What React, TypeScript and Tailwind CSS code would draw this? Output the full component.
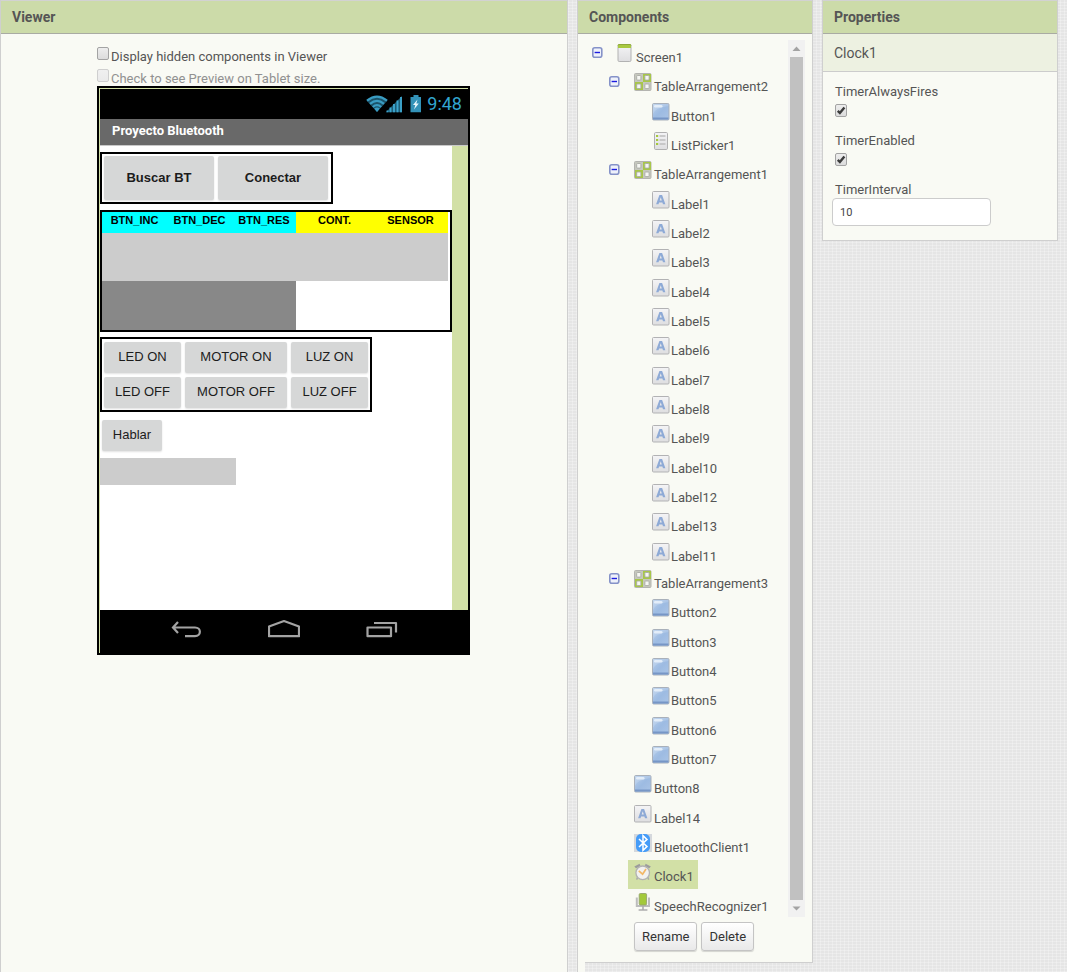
import React, { useState } from "react";

type Kind = "screen" | "table" | "button" | "list" | "label" | "bluetooth" | "clock" | "speech";
type Node = { name: string; kind: Kind; depth: 0 | 1 | 2; open?: boolean };

const label = (n: number): Node => ({ name: `Label${n}`, kind: "label", depth: 2 });
const button = (n: number): Node => ({ name: `Button${n}`, kind: "button", depth: 2 });

const upperNodes: Node[] = [
  { name: "Screen1", kind: "screen", depth: 0, open: true },
  { name: "TableArrangement2", kind: "table", depth: 1, open: true },
  button(1),
  { name: "ListPicker1", kind: "list", depth: 2 },
  { name: "TableArrangement1", kind: "table", depth: 1, open: true },
  ...[1, 2, 3, 4, 5, 6, 7, 8, 9, 10, 12, 13, 11].map(label),
];

const lowerNodes: Node[] = [
  { name: "TableArrangement3", kind: "table", depth: 1, open: true },
  ...[2, 3, 4, 5, 6, 7].map(button),
  { name: "Button8", kind: "button", depth: 1 },
  { name: "Label14", kind: "label", depth: 1 },
  { name: "BluetoothClient1", kind: "bluetooth", depth: 1 },
  { name: "Clock1", kind: "clock", depth: 1 },
  { name: "SpeechRecognizer1", kind: "speech", depth: 1 },
];

function Defs() {
  return (
    <svg width="0" height="0" className="absolute" aria-hidden="true">
      <defs>
        <linearGradient id="grey" x1="0" y1="0" x2="0" y2="1">
          <stop offset="0" stopColor="#f4f4f6" />
          <stop offset="1" stopColor="#dedee0" />
        </linearGradient>
        <linearGradient id="blue" x1="0" y1="0" x2="1" y2="1">
          <stop offset="0" stopColor="#b9d0ec" />
          <stop offset="0.5" stopColor="#9dbbe2" />
          <stop offset="1" stopColor="#aac4e6" />
        </linearGradient>
      </defs>
    </svg>
  );
}

function KindIcon({ kind }: { kind: Kind }) {
  return (
    <svg viewBox="0 0 18 18" className="mt-[3px] h-[18px] w-[18px] shrink-0" aria-hidden="true">
      {kind === "screen" && (
        <>
          <rect x="2" y="0.5" width="13" height="17" rx="1.2" fill="url(#grey)" stroke="#b2b2b2" />
          <path d="M2 1.5Q2 0.5 3 0.5H14Q15 0.5 15 1.5V4H2Z" fill="#a8c93f" />
          <path d="M2 1.5Q2 0.5 3 0.5H14Q15 0.5 15 1.5" fill="none" stroke="#8fa83a" />
        </>
      )}
      {kind === "table" && (
        <>
          <rect x="0.5" y="0.5" width="16.5" height="17" rx="1" fill="#c6c8bd" stroke="#b4b4b0" />
          <rect x="9" y="1" width="8" height="8" fill="#a8c748" />
          <rect x="1" y="9" width="8" height="8" fill="#a8c748" />
          <g fill="#f6f7f2" stroke="#a9aaa5" strokeWidth="0.9">
            <rect x="2.7" y="2.5" width="4.2" height="4.6" rx="0.8" />
            <rect x="10.9" y="2.5" width="4.2" height="4.6" rx="0.8" />
            <rect x="2.7" y="11" width="4.2" height="4.6" rx="0.8" />
            <rect x="10.9" y="11" width="4.2" height="4.6" rx="0.8" />
          </g>
        </>
      )}
      {kind === "button" && (
        <>
          <rect x="0.5" y="0.5" width="16.5" height="16.5" rx="1.2" fill="url(#blue)" stroke="#a9b0ba" />
          <path d="M1 14.5H16.5V16.5H1Z" fill="#7796c6" />
          <path d="M1 11Q2.5 5 16.5 3V1H1Z" fill="#fff" opacity="0.16" />
          <rect x="2" y="2" width="8.5" height="2.4" rx="1.2" fill="#eaf2fb" opacity="0.85" />
        </>
      )}
      {kind === "list" && (
        <>
          <rect x="2.5" y="0.5" width="13" height="17" rx="1.2" fill="url(#grey)" stroke="#b0b0b0" />
          <path d="M7.5 4H13.5M7.5 8H13.5M7.5 12H13.5" stroke="#bdbdbd" strokeWidth="1.3" />
          <path d="M4 4H6.2M4 8H6.2M4 12H6.2" stroke="#a5c83c" strokeWidth="2" />
        </>
      )}
      {kind === "label" && (
        <>
          <rect x="0.5" y="0.5" width="16.5" height="16.5" rx="1" fill="url(#grey)" stroke="#b2b2b4" />
          <path
            d="M4.1 13.3L7.4 3.9H10.1L13.4 13.3H11L10.4 11.4H7.1L6.5 13.3ZM7.7 9.4H9.8L8.75 6.2Z"
            fill="#8eaad6"
            fillRule="evenodd"
          />
        </>
      )}
      {kind === "bluetooth" && (
        <>
          <rect width="18" height="18" fill="#d5d8dc" />
          <rect x="2" y="0" width="14" height="18" rx="5" fill="#459cf8" />
          <path d="M5 5L13 12.6L9 16.4V1.6L13 5.4L5 13" fill="none" stroke="#fff" strokeWidth="1.5" />
        </>
      )}
      {kind === "clock" && (
        <>
          <path d="M0.3 3.4L5.6 0.7L6.4 3L2 5.2ZM16.9 3.4L11.6 0.7L10.8 3L15.2 5.2Z" fill="#9c9c9c" />
          <path d="M3.6 14.4L2.6 16.6M13.8 14.4L14.8 16.6" stroke="#aaa" strokeWidth="1.5" />
          <circle cx="8.7" cy="9.8" r="6.8" fill="#f2f1ef" stroke="#b2b2b2" strokeWidth="1.3" />
          <path d="M4.8 7.8L8.6 11.2L12 6" fill="none" stroke="#f2b766" strokeWidth="1.7" />
        </>
      )}
      {kind === "speech" && (
        <>
          <path d="M2.8 4.5V13H15V4.5" fill="none" stroke="#bcbcbc" strokeWidth="2" />
          <path d="M9 13V16.6M4.6 17H13.4" stroke="#adadad" strokeWidth="1.6" />
          <rect x="5.2" y="0.5" width="7.4" height="11.5" rx="1.2" fill="#a3c93a" stroke="#95a46c" strokeWidth="0.9" />
        </>
      )}
    </svg>
  );
}

function Toggle({ name }: { name: string }) {
  return (
    <button type="button" aria-label={`Collapse ${name}`} className="mt-[6px] h-[11px] w-[11px] shrink-0">
      <svg viewBox="0 0 11 11" className="block h-[11px] w-[11px]">
        <rect x="0.8" y="0.8" width="9" height="9.4" rx="2" fill="#eef1fa" stroke="#8592c8" strokeWidth="1.6" />
        <path d="M2.6 5.5H8" stroke="#1c1ce0" strokeWidth="1.4" />
      </svg>
    </button>
  );
}

const indent = { 0: "pl-[14px]", 1: "pl-[31px]", 2: "pl-[49px]" };
const offset = { 0: "ml-[13px] gap-0.5", 1: "ml-2 gap-0.5 pl-1.5", 2: "ml-2 gap-px pl-1.5" };

function TreeRows({ nodes, className }: { nodes: Node[]; className: string }) {
  return (
    <ul className={`grid auto-rows-fr ${className}`}>
      {nodes.map((n) => (
        <li key={n.name} className={`flex items-start ${indent[n.depth]}`}>
          <span className="flex w-[11px] shrink-0">{n.open && <Toggle name={n.name} />}</span>
          <a
            href="#"
            className={`flex h-[29px] items-start pr-1 ${offset[n.depth]} ${n.name === "Clock1" ? "bg-[#d2e0a6]" : ""}`}
          >
            <KindIcon kind={n.kind} />
            <span className="mt-[9px] leading-4">{n.name}</span>
          </a>
        </li>
      ))}
    </ul>
  );
}

function Check({
  id,
  checked,
  onChange,
  disabled,
}: {
  id: string;
  checked: boolean;
  onChange: () => void;
  disabled?: boolean;
}) {
  return (
    <span className="grid h-[13px] w-3 shrink-0">
      <input
        id={id}
        type="checkbox"
        checked={checked}
        onChange={onChange}
        disabled={disabled}
        className="col-start-1 row-start-1 h-[13px] w-3 appearance-none rounded-[2px] border border-[#a3a3a3] bg-linear-to-b from-[#ededed] to-[#dcdcdc] disabled:border-[#cfcfcf] disabled:from-[#f0f0f0] disabled:to-[#eaeaea]"
      />
      {checked && (
        <svg viewBox="0 0 12 13" className="pointer-events-none col-start-1 row-start-1 h-[13px] w-3">
          <path d="M2.8 6.8L4.9 9L9.4 3.4" fill="none" stroke="#3c3c3c" strokeWidth="2.4" />
        </svg>
      )}
    </span>
  );
}

function Heading({ children }: { children: React.ReactNode }) {
  return (
    <h2 className="h-[34px] border-b border-t border-b-[#a9aba3] border-t-[#d2d2d2] bg-[#ccdba9] pl-[11px] text-sm leading-8 font-bold">
      {children}
    </h2>
  );
}

function AppButton({ children, className }: { children: string; className: string }) {
  return (
    <button
      type="button"
      className={`rounded-[2px] bg-[#d6d7d7] text-center font-['Liberation_Sans',Arial,sans-serif] text-[13px] text-[#1c1c1c] shadow-[0_1px_2px_rgba(0,0,0,0.12)] ${className}`}
    >
      {children}
    </button>
  );
}

function StatusBar() {
  return (
    <div className="flex h-[30px] items-center justify-end bg-black pr-1.5">
      <svg viewBox="0 0 56 18" className="mr-[5px] h-[18px] w-14" aria-label="Wi-Fi, signal and battery">
        <path d="M0.5 5.500Q11 -3.500 21.500 5.500L11 17Z" fill="#1b5369" />
        <g fill="none" stroke="#3a9cc2" strokeWidth="2.2">
          <path d="M1 5.600Q11 -2.400 21 5.600" />
          <path d="M4 8.900Q11 3 18 8.900" />
          <path d="M6.800 12Q11 8.400 15.200 12" />
        </g>
        <path d="M8.200 13.600Q11 11.600 13.800 13.600L11 17Z" fill="#3a9cc2" />
        <path d="M36 1V17.200H19.800Z" fill="#1d5c75" />
        <path d="M21.500 15.500V17.200M24.500 12.500V17.200M28 9V17.200M31.500 5.500V17.200M35 2V17.200" stroke="#3da4cc" strokeWidth="1.9" />
        <path d="M47.500 0H52.500V2H55V17.300H44.500V2H47.500Z" fill="#3392b8" />
        <path d="M51.500 4.500L47 10H49.300L48 14.500L52.800 8.600H50.300Z" fill="#e8f6fb" />
      </svg>
      <span className="text-lg leading-6 text-[#32a5d0]">9:48</span>
    </div>
  );
}

function NavBar() {
  return (
    <div className="flex h-[43px] items-start justify-center gap-[66px] bg-black pt-[9px]">
      <svg viewBox="0 0 32 20" className="h-5 w-8" fill="none" stroke="#a3a3a3" strokeWidth="2.200" aria-label="Back">
        <path d="M8 3L3 8.500L8 14M3 8.500H25C31.500 8.500 31.500 17.200 25 17.200H15" />
      </svg>
      <svg viewBox="0 0 32 20" className="h-5 w-8" fill="none" stroke="#a3a3a3" strokeWidth="2.200" aria-label="Home">
        <path d="M1 7.500L16 2L31 7.500V17.200H1Z" strokeLinejoin="round" />
      </svg>
      <svg viewBox="0 0 32 20" className="h-5 w-8" fill="none" stroke="#a3a3a3" strokeWidth="2.200" aria-label="Recent apps">
        <path d="M1.500 8.500H25V17.200H1.500ZM8 4H30V13.500" strokeLinejoin="round" />
      </svg>
    </div>
  );
}

function Phone() {
  return (
    <div className="w-[373px] border-2 border-black bg-black text-black">
      <div className="border-t border-l border-[#d2e0a6]">
        <StatusBar />
        <div className="h-[27px] border-b border-[#c9c9c9] bg-[#696969] pl-3 text-[13px] leading-6 font-bold text-white">
          Proyecto Bluetooth
        </div>
        <div className="flex h-[464px] bg-[#d2e0a6]">
          <div className="flex flex-1 flex-col items-start bg-white pt-1.5">
            <div className="flex gap-1 border-2 border-black py-0.5 pr-[3px] pl-0.5">
              <AppButton className="h-11 w-[110px] font-bold">Buscar BT</AppButton>
              <AppButton className="h-11 w-[110px] font-bold">Conectar</AppButton>
            </div>
            <div className="mt-1.5 w-full border-2 border-black pr-0.5">
              <table className="w-full table-fixed border-collapse font-['Liberation_Sans',Arial,sans-serif] text-[11px] leading-4">
                <colgroup>
                  <col className="w-[65px]" />
                  <col className="w-[65px]" />
                  <col className="w-16" />
                  <col className="w-[77px]" />
                  <col className="w-[75px]" />
                </colgroup>
                <thead>
                  <tr className="h-[21px] align-top">
                    <th className="bg-[#00ffff] p-0">BTN_INC</th>
                    <th className="bg-[#00ffff] p-0">BTN_DEC</th>
                    <th className="bg-[#00ffff] p-0">BTN_RES</th>
                    <th className="bg-[#ffff00] p-0">CONT.</th>
                    <th className="bg-[#ffff00] p-0">SENSOR</th>
                  </tr>
                </thead>
                <tbody>
                  <tr className="h-12">
                    <td colSpan={5} className="bg-[#cccccc] p-0" />
                  </tr>
                  <tr className="h-[49px]">
                    <td colSpan={3} className="bg-[#888888] p-0" />
                    <td colSpan={2} className="p-0" />
                  </tr>
                </tbody>
              </table>
            </div>
            <div className="mt-[5px] grid grid-cols-[77px_102px_77px] gap-1 border-2 border-black px-0.5 pt-[3px] pb-0.5">
              {["LED ON", "MOTOR ON", "LUZ ON", "LED OFF", "MOTOR OFF", "LUZ OFF"].map((t) => (
                <AppButton key={t} className="h-[31px] pb-0.5">
                  {t}
                </AppButton>
              ))}
            </div>
            <AppButton className="mt-2 ml-0.5 h-[31px] w-[60px] pb-0.5">Hablar</AppButton>
            <div className="mt-[7px] h-[27px] w-[136px] bg-[#cccccc]" />
          </div>
          <div className="w-4" />
        </div>
        <NavBar />
      </div>
    </div>
  );
}

function Scrollbar() {
  return (
    <div className="flex h-[877px] w-[17px] flex-col items-center justify-between bg-[#f1f1f1]" aria-hidden="true">
      <svg viewBox="0 0 17 17" className="h-[17px] w-[17px]">
        <path d="M8.500 6.500L12.500 11H4.500Z" fill="#a3a3a3" />
      </svg>
      <div className="w-[13px] flex-1 bg-[#c1c1c1]" />
      <svg viewBox="0 0 17 17" className="h-[17px] w-[17px]">
        <path d="M8.500 10.500L12.500 6.500H4.500Z" fill="#a3a3a3" />
      </svg>
    </div>
  );
}

const pushButton =
  "h-[29px] rounded-[3px] border border-[#c4c4c4] bg-linear-to-b from-white to-[#e9e9e9] px-[7px] pt-px text-[#333] shadow-[0_1px_1px_rgba(0,0,0,0.15)]";

export default function App() {
  const [hidden, setHidden] = useState(false);
  const [tablet, setTablet] = useState(false);
  const [always, setAlways] = useState(true);
  const [enabled, setEnabled] = useState(true);
  const [interval, setIntervalValue] = useState("10");

  return (
    <div className="flex min-h-screen items-stretch bg-[#e5e5e5] bg-[repeating-linear-gradient(0deg,rgba(255,255,255,0.25)_0_1px,transparent_1px_3px),repeating-linear-gradient(90deg,rgba(255,255,255,0.25)_0_1px,transparent_1px_4px)] pr-[9px] font-[Roboto,'Liberation_Sans',sans-serif] text-[13px] text-[#555]">
      <Defs />
      <section className="min-w-[480px] flex-1 border-x border-[#cfcfcf] bg-[#f9faf4]">
        <Heading>Viewer</Heading>
        <div className="flex flex-col items-start pt-[13px] pl-24">
          <div className="flex h-[22px] gap-0.5">
            <Check id="hidden" checked={hidden} onChange={() => setHidden(!hidden)} />
            <label htmlFor="hidden" className="mt-0.5 leading-4">
              Display hidden components in Viewer
            </label>
          </div>
          <div className="flex h-[17px] gap-0.5">
            <Check id="tablet" disabled checked={tablet} onChange={() => setTablet(!tablet)} />
            <label htmlFor="tablet" className="mt-0.5 leading-4 text-[#919191]">
              Check to see Preview on Tablet size.
            </label>
          </div>
          <Phone />
        </div>
      </section>

      <section className="ml-[9px] flex w-[236px] shrink-0 flex-col">
        <div className="border-x border-[#cfcfcf] bg-[#f9faf4]">
          <Heading>Components</Heading>
          <div className="flex h-[883px] pt-1.5">
            <div className="w-[210px]">
              <div className="pt-px">
                <TreeRows nodes={upperNodes} className="h-[528px]" />
                <TreeRows nodes={lowerNodes} className="-mt-0.5 h-[352px]" />
              </div>
            </div>
            <Scrollbar />
          </div>
          <div className="flex gap-1 pt-[5px] pb-[11px] pl-14">
            <button type="button" className={pushButton}>
              Rename
            </button>
            <button type="button" className={pushButton}>
              Delete
            </button>
          </div>
        </div>
        <div className="flex flex-1">
          <div className="w-2 border-l border-[#cfcfcf] bg-[#f9faf4]" />
          <div className="flex-1 border-t border-[#cfcfcf]" />
        </div>
      </section>

      <section className="ml-[9px] w-[236px] shrink-0 self-start border-x border-b border-[#cfcfcf] bg-[#f9faf4]">
        <Heading>Properties</Heading>
        <h3 className="h-[38px] border-b border-[#cccccc] bg-[#edf1e1] pt-px pl-[11px] text-sm leading-9">Clock1</h3>
        <div className="flex flex-col pt-3 pb-3.5 pl-3 leading-4">
          <label htmlFor="always">TimerAlwaysFires</label>
          <div className="mt-1 mb-4 flex h-[13px]">
            <Check id="always" checked={always} onChange={() => setAlways(!always)} />
          </div>
          <label htmlFor="enabled">TimerEnabled</label>
          <div className="mt-1 mb-4 flex h-[13px]">
            <Check id="enabled" checked={enabled} onChange={() => setEnabled(!enabled)} />
          </div>
          <label htmlFor="interval">TimerInterval</label>
          <input
            id="interval"
            type="text"
            value={interval}
            onChange={(e) => setIntervalValue(e.target.value)}
            className="-ml-[3px] h-7 w-[159px] rounded-[4px] border border-[#cccccc] bg-white px-[7px] text-[11px] text-[#444]"
          />
        </div>
      </section>
    </div>
  );
}
